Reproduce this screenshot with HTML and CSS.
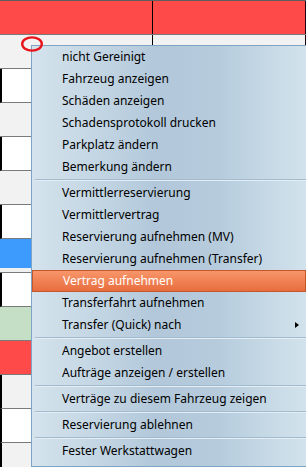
FILE: index.html
```html
<!DOCTYPE html>
<html>
<head>
<meta charset="utf-8">
<link rel="stylesheet" href="styles.css">
</head>
<body>
<div class="grid">
  <div class="hdr"><div class="c1"></div><div class="c2"></div></div>
  <div class="row gray"><div class="c1"></div><div class="c2"></div></div>
  <div class="row white edge"></div>
  <div class="row gray"></div>
  <div class="row white edge"></div>
  <div class="row gray"></div>
  <div class="row white edge"></div>
  <div class="row blue"></div>
  <div class="row white edge"></div>
  <div class="row green"></div>
  <div class="row red"></div>
  <div class="row gray edge"></div>
  <div class="row white edge"></div>
  <div class="row gray edge"></div>
</div>

<div class="menu">
  <div class="item">nicht Gereinigt</div>
  <div class="item">Fahrzeug anzeigen</div>
  <div class="item">Schäden anzeigen</div>
  <div class="item">Schadensprotokoll drucken</div>
  <div class="item">Parkplatz ändern</div>
  <div class="item">Bemerkung ändern</div>
  <div class="sep"></div>
  <div class="item">Vermittlerreservierung</div>
  <div class="item">Vermittlervertrag</div>
  <div class="item">Reservierung aufnehmen (MV)</div>
  <div class="item">Reservierung aufnehmen (Transfer)</div>
  <div class="item active">Vertrag aufnehmen</div>
  <div class="item">Transferfahrt aufnehmen</div>
  <div class="item sub">Transfer (Quick) nach<span class="arrow"></span></div>
  <div class="sep"></div>
  <div class="item">Angebot erstellen</div>
  <div class="item">Aufträge anzeigen / erstellen</div>
  <div class="sep"></div>
  <div class="item">Verträge zu diesem Fahrzeug zeigen</div>
  <div class="sep"></div>
  <div class="item">Reservierung ablehnen</div>
  <div class="sep"></div>
  <div class="item">Fester Werkstattwagen</div>
</div>

<svg class="mark" width="24" height="18" viewBox="0 0 24 18"><ellipse cx="12" cy="9" rx="9.8" ry="6.6" fill="none" stroke="#e8141c" stroke-width="2.4"/></svg>
</body>
</html>
```

FILE: styles.css
```css
html, body {
  margin: 0;
  padding: 0;
  overflow: hidden;
  width: 306px;
  height: 467px;
  background: #ffffff;
  font-family: "Noto Sans", "Open Sans", sans-serif;
}

.grid {
  display: flex;
  flex-direction: column;
}

.hdr {
  height: 33px;
  border-top: 1px solid #5f5f5f;
  border-bottom: 1px solid #7a7a7a;
  background: #ff4a4a;
  display: flex;
}

.hdr .c1 {
  width: 152px;
  border-right: 1px solid #000;
}

.hdr .c2 {
  flex: 1;
  border-right: 1px solid #1a0010;
}

.row {
  height: 33px;
  border-bottom: 1px solid #7a7a7a;
  box-sizing: content-box;
  display: flex;
}

.row .c1 {
  width: 152px;
  border-right: 1px solid #000;
}

.row .c2 {
  flex: 1;
  border-right: 1px solid #1a0010;
}

.gray { background: #f2f2f2; }
.white { background: #ffffff; }
.blue { background: linear-gradient(#3d9bfd 0, #3d9bfd 29px, #f0f0f0 29px); }
.green { background: #c5dec6; }
.red { background: #ff4a4a; }
.edge { border-left: 2px solid #000; }

.mark {
  position: absolute;
  left: 20px;
  top: 35px;
  z-index: 2;
}

.menu {
  position: absolute;
  left: 31px;
  top: 45px;
  width: 274px;
  padding: 0 1px 4px 0;
  border: 1px solid #7ea3c4;
  background: linear-gradient(to right, #d4e3ec 0%, #c6d8e5 20%, #b2c8da 45%, #b6ccdd 68%, #d2e3ec 100%);
  font-size: 12px;
  color: #000;
  z-index: 1;
}

.item {
  height: 22px;
  line-height: 22px;
  padding-left: 30px;
  box-sizing: border-box;
  position: relative;
  white-space: nowrap;
}

.item.active {
  color: #ffffff;
  background: linear-gradient(#f8966a, #e86d3e);
  border: 1px solid #c4572c;
  line-height: 20px;
}

.sep {
  height: 4px;
  margin-left: 3px;
  box-sizing: border-box;
  border-top: 1px solid transparent;
  position: relative;
}

.sep::before {
  content: "";
  display: block;
  height: 1px;
  background: #a2bbcf;
}

.sep::after {
  content: "";
  display: block;
  height: 1px;
  background: #e3edf3;
}

.arrow {
  position: absolute;
  right: 7px;
  top: 8px;
  width: 0;
  height: 0;
  border-top: 3.5px solid transparent;
  border-bottom: 3.5px solid transparent;
  border-left: 4px solid #000;
}
```
